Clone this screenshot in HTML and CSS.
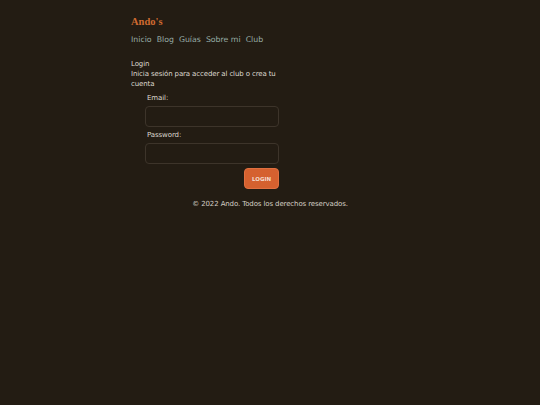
FILE: index.html
```html
<!DOCTYPE html>
<html lang="es">
<head>
<meta charset="utf-8">
<title>Ando's</title>
<link rel="stylesheet" href="styles.css">
</head>
<body>
<div class="page">
  <header class="header">
    <h1 class="brand">Ando's</h1>
    <nav class="nav">
      <a href="#">Inicio</a>
      <a href="#">Blog</a>
      <a href="#">Guías</a>
      <a href="#">Sobre mi</a>
      <a href="#">Club</a>
    </nav>
  </header>
  <main class="main">
    <p class="title">Login</p>
    <p class="intro">Inicia sesión para acceder al club o crea tu cuenta</p>
    <form class="form">
      <label class="label" for="email">Email:</label>
      <input class="input" id="email" type="email">
      <label class="label" for="password">Password:</label>
      <input class="input" id="password" type="password">
      <div class="actions">
        <button class="btn" type="button">LOGIN</button>
      </div>
    </form>
  </main>
  <footer class="footer">© 2022 Ando. Todos los derechos reservados.</footer>
</div>
</body>
</html>
```
FILE: styles.css
```css
html, body {
  margin: 0;
  padding: 0;
  background: #231c13;
}
body {
  font-family: "DejaVu Sans", sans-serif;
  color: #ddd8d0;
}
.page {
  width: 278px;
  margin: 0 auto;
  padding-top: 15px;
}
.brand {
  margin: 0;
  font-family: "Liberation Serif", serif;
  font-weight: bold;
  font-size: 10.5px;
  line-height: 14px;
  color: #cf6a30;
}
.nav {
  display: flex;
  gap: 5px;
  margin-top: 6px;
}
.nav a {
  color: #97aca6;
  text-decoration: none;
  font-size: 7.8px;
  line-height: 10px;
}
.main {
  width: 150px;
  margin-top: 14px;
}
.title, .intro {
  margin: 0;
  font-size: 7px;
  line-height: 10px;
  letter-spacing: -0.12px;
}
.form {
  display: flex;
  flex-direction: column;
  padding-left: 14px;
  margin-top: 4px;
}
.label {
  font-size: 7px;
  line-height: 10px;
  letter-spacing: -0.1px;
  padding-left: 2px;
  margin-bottom: 3px;
}
.input {
  box-sizing: border-box;
  height: 21px;
  width: 134px;
  background: transparent;
  border: 1px solid #3d342a;
  border-radius: 4px;
  margin: 0 0 3px 0;
}
.actions {
  display: flex;
  justify-content: flex-end;
  width: 134px;
  margin-top: 1px;
}
.btn {
  background: #d5612f;
  color: #f4dccd;
  border: 1px solid #e07040;
  border-radius: 4px;
  font-family: "DejaVu Sans", sans-serif;
  font-weight: bold;
  font-size: 5.5px;
  width: 35px;
  height: 21px;
  padding: 0;
}
.footer {
  text-align: center;
  font-size: 7px;
  line-height: 10px;
  letter-spacing: -0.12px;
  color: #d4cec4;
  margin-top: 10px;
}
```
